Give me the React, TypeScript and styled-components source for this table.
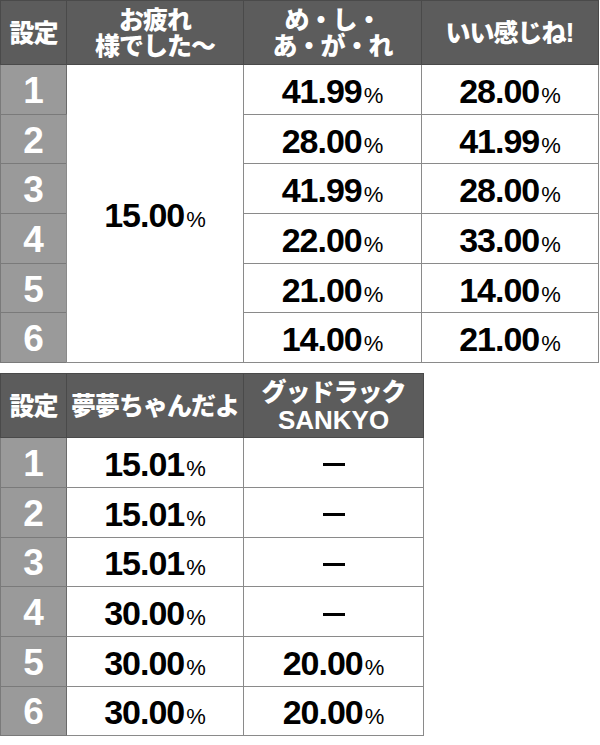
import styled, { createGlobalStyle } from "styled-components";

const GlobalStyle = createGlobalStyle`
  html, body {
    margin: 0;
    padding: 0;
    background: #ffffff;
  }
  body {
    font-family: "Liberation Sans", "Noto Sans CJK JP", sans-serif;
  }
`;

const Page = styled.div`
  width: 600px;
  display: flex;
  flex-direction: column;
  align-items: flex-start;
  gap: 10px;
`;

const Table = styled.table<{ $width: number }>`
  width: ${(props) => props.$width}px;
  border-collapse: collapse;
  table-layout: fixed;
  border: 1px solid #7a7a7a;
`;

const HeadRow = styled.tr`
  height: 64px;
`;

const BodyRow = styled.tr`
  height: 49.7px;
`;

const Th = styled.th<{ $lh?: number }>`
  background: #5c5c5c;
  color: #ffffff;
  font-family: "Liberation Sans", "Noto Sans CJK JP", sans-serif;
  font-weight: 900;
  font-size: 25px;
  line-height: ${(props) => props.$lh ?? 26}px;
  letter-spacing: -1px;
  text-align: center;
  vertical-align: middle;
  padding: 0;
  border: 1px solid #4a4a4a;
  white-space: nowrap;
`;

const Latin = styled.span<{ $size?: number }>`
  font-family: "Liberation Sans", sans-serif;
  font-weight: 700;
  font-size: ${(props) => props.$size ?? 27}px;
  letter-spacing: 0;
`;

const SetCell = styled.td`
  background: #9a9a9a;
  color: #ffffff;
  font-family: "Liberation Sans", sans-serif;
  font-weight: 700;
  font-size: 37px;
  text-align: center;
  vertical-align: middle;
  padding: 3px 0 0;
  border: 1px solid #7a7a7a;
  border-top-color: #c8c8c8;
  border-right-color: #6a6a6a;
`;

const ValueCell = styled.td`
  background: #ffffff;
  color: #000000;
  font-family: "Liberation Sans", sans-serif;
  font-weight: 700;
  font-size: 34px;
  letter-spacing: -1px;
  text-align: center;
  vertical-align: middle;
  padding: 4px 0 0;
  border: 1px solid #8a8a8a;
  white-space: nowrap;
`;

const Pct = styled.span`
  font-weight: 400;
  font-size: 22px;
  letter-spacing: 0;
  margin-left: 2px;
`;

const Dash = styled.span`
  display: inline-block;
  width: 22px;
  height: 3px;
  background: #000000;
  vertical-align: middle;
  margin-bottom: 4px;
`;

function Value({ v }: { v: string | null }) {
  if (v === null) return <Dash role="img" aria-label="ー" />;
  return (
    <>
      {v}
      <Pct>%</Pct>
    </>
  );
}

const table1 = [
  ["41.99", "28.00"],
  ["28.00", "41.99"],
  ["41.99", "28.00"],
  ["22.00", "33.00"],
  ["21.00", "14.00"],
  ["14.00", "21.00"],
];

const table2: [string, string | null][] = [
  ["15.01", null],
  ["15.01", null],
  ["15.01", null],
  ["30.00", null],
  ["30.00", "20.00"],
  ["30.00", "20.00"],
];

export default function App() {
  return (
    <Page>
      <GlobalStyle />
      <Table $width={598}>
        <colgroup>
          <col style={{ width: 66 }} />
          <col style={{ width: 177 }} />
          <col style={{ width: 178 }} />
          <col style={{ width: 177 }} />
        </colgroup>
        <thead>
          <HeadRow>
            <Th>設定</Th>
            <Th>
              お疲れ
              <br />
              様でした〜
            </Th>
            <Th>
              め・し・
              <br />
              あ・が・れ
            </Th>
            <Th>
              いい感じね<Latin>!</Latin>
            </Th>
          </HeadRow>
        </thead>
        <tbody>
          {table1.map((row, i) => (
            <BodyRow key={i}>
              <SetCell>{i + 1}</SetCell>
              {i === 0 && (
                <ValueCell rowSpan={6}>
                  <Value v="15.00" />
                </ValueCell>
              )}
              <ValueCell>
                <Value v={row[0]} />
              </ValueCell>
              <ValueCell>
                <Value v={row[1]} />
              </ValueCell>
            </BodyRow>
          ))}
        </tbody>
      </Table>

      <Table $width={423}>
        <colgroup>
          <col style={{ width: 66 }} />
          <col style={{ width: 177 }} />
          <col style={{ width: 180 }} />
        </colgroup>
        <thead>
          <HeadRow>
            <Th>設定</Th>
            <Th>夢夢ちゃんだよ</Th>
            <Th $lh={28}>
              グッドラック
              <br />
              <Latin $size={26}>SANKYO</Latin>
            </Th>
          </HeadRow>
        </thead>
        <tbody>
          {table2.map((row, i) => (
            <BodyRow key={i}>
              <SetCell>{i + 1}</SetCell>
              <ValueCell>
                <Value v={row[0]} />
              </ValueCell>
              <ValueCell>
                <Value v={row[1]} />
              </ValueCell>
            </BodyRow>
          ))}
        </tbody>
      </Table>
    </Page>
  );
}
